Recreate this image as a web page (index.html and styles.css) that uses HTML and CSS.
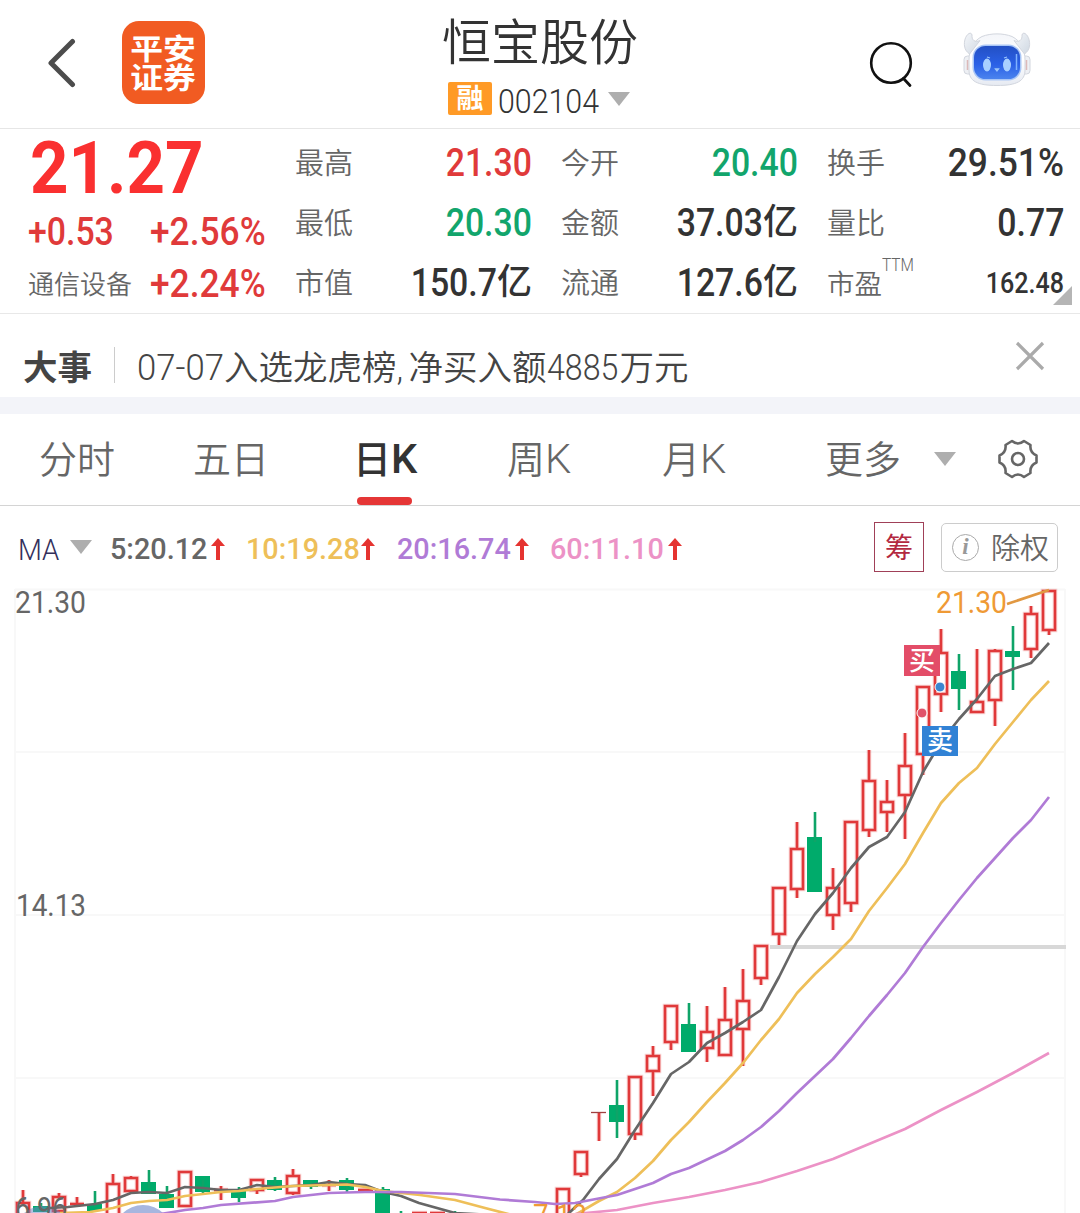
FILE: index.html
```html
<!DOCTYPE html>
<html lang="zh-CN">
<head>
<meta charset="utf-8">
<title>恒宝股份 002104</title>
<link rel="stylesheet" href="styles.css">
</head>
<body>
<header class="topbar">
  <svg class="back" width="30" height="50" viewBox="0 0 30 50"><path d="M25.500 3.500L4 25 25.500 46.500" fill="none" stroke="#4c4c4c" stroke-width="5" stroke-linecap="round" stroke-linejoin="round"/></svg>
  <div class="broker"><span>平安</span><span>证券</span></div>
  <div class="title">
    <h1>恒宝股份</h1>
    <div class="code"><b class="tag">融</b><span class="num code-num">002104</span><i class="tri"></i></div>
  </div>
  <svg class="search" width="44" height="48" viewBox="0 0 44 48"><circle cx="22" cy="23" r="19.800" fill="none" stroke="#111" stroke-width="2.600"/><path d="M34.500 38.500l6.500 7" stroke="#111" stroke-width="2.800" stroke-linecap="round"/></svg>
  <svg class="robot" width="68" height="56" viewBox="0 0 68 56">
    <defs>
      <linearGradient id="shell" x1="0" y1="0" x2="0" y2="1"><stop offset="0" stop-color="#f4f6fa"/><stop offset=".5" stop-color="#fff"/><stop offset="1" stop-color="#e6eaf2"/></linearGradient>
      <linearGradient id="face" x1="0" y1="0" x2="0" y2="1"><stop offset="0" stop-color="#2350c4"/><stop offset=".55" stop-color="#2a60e6"/><stop offset="1" stop-color="#4a83ee"/></linearGradient>
      <linearGradient id="horn" x1="0" y1="0" x2="1" y2="1"><stop offset="0" stop-color="#f5f7fa"/><stop offset="1" stop-color="#cfd8e2"/></linearGradient>
    </defs>
    <g stroke="#d2d6de" stroke-width="1">
      <rect x="1" y="24" width="9" height="18" rx="3.500" fill="#eef0f4"/>
      <rect x="58" y="24" width="9" height="18" rx="3.500" fill="#eef0f4"/>
      <path d="M19 4.500C28 1 40 1 49 4.500 58 9 62 18 62 28v10c0 11-8 15.500-28 15.500S6 49 6 38V28C6 18 10 9 19 4.500z" fill="url(#shell)"/>
      <path d="M6 1.500C2 4 1 10 1.500 14 2 18 4 20 6.500 22L17 8.500C12 11 8.500 8 9 3 8.500 1 7.500 1 6 1.500z" fill="url(#horn)"/>
      <path d="M62 1.500c4 2.500 5 8.500 4.500 12.500-.5 4-2.500 6-5 8L51 8.500c5 2.500 8.500-.5 8-5.500.5-2 1.500-2 3-1.500z" fill="url(#horn)"/>
    </g>
    <path d="M4.500 28v10M63.500 28v10" stroke="#dcb9b9" stroke-width="1.500"/>
    <rect x="9.500" y="12.500" width="49" height="36" rx="13" fill="#a9c6f6"/>
    <rect x="11" y="14" width="46" height="33" rx="11.500" fill="url(#face)"/>
    <ellipse cx="24" cy="33" rx="4" ry="6.500" fill="#a8d0ff"/><ellipse cx="44" cy="33" rx="4" ry="6.500" fill="#a8d0ff"/>
    <path d="M24 25l3 1M41 26l3-1M32.500 37l1.500 2 1.500-2z" stroke="#9cc5fa" stroke-width="1.300" fill="#9cc5fa"/>
    <path d="M53.500 22v16" stroke="#7fb2ff" stroke-width="1.500"/>
  </svg>
</header>

<section class="quote">
  <div class="last">
    <div class="price"><span class="num">21.27</span></div>
    <div class="chg"><span class="num">+0.53</span><span class="num pct">+2.56%</span></div>
    <div class="chg"><em>通信设备</em><span class="num pct">+2.24%</span></div>
  </div>
  <dl class="stats c1">
    <dt>最高</dt><dd class="up"><span class="num">21.30</span></dd>
    <dt>最低</dt><dd class="down"><span class="num">20.30</span></dd>
    <dt>市值</dt><dd><span class="num">150.7</span><u>亿</u></dd>
  </dl>
  <dl class="stats c2">
    <dt>今开</dt><dd class="down"><span class="num">20.40</span></dd>
    <dt>金额</dt><dd><span class="num">37.03</span><u>亿</u></dd>
    <dt>流通</dt><dd><span class="num">127.6</span><u>亿</u></dd>
  </dl>
  <dl class="stats c3">
    <dt>换手</dt><dd><span class="num pct">29.51%</span></dd>
    <dt>量比</dt><dd><span class="num">0.77</span></dd>
    <dt class="pe">市盈<sup>TTM</sup></dt><dd class="small"><span class="num">162.48</span></dd>
  </dl>
  <i class="corner"></i>
</section>

<section class="news">
  <b>大事</b>
  <p><span class="num n1">07-07</span>入选龙虎榜<span class="comma">,</span>净买入额<span class="num n2">4885</span>万元</p>
  <svg class="close" width="30" height="30" viewBox="0 0 30 30"><path d="M2 2l26 26M28 2L2 28" stroke="#aaa" stroke-width="3.200"/></svg>
</section>

<nav class="tabs">
  <span>分时</span><span>五日</span><span class="on">日<i class="k">K</i></span><span>周<i class="k">K</i></span><span>月<i class="k">K</i></span><span>更多</span>
  <i class="tri"></i>
  <svg class="gear" width="42" height="42" viewBox="-21 -21 42 42" fill="none" stroke="#666" stroke-width="2.600" stroke-linejoin="round"><path d="M18.500-3.500V3.500Q11.500 6.500 12.500 14L6 18Q0 13-6 18L-12.500 14Q-11.500 6.500-18.500 3.500V-3.500Q-11.500-6.500-12.500-14L-6-18Q0-13 6-18L12.500-14Q11.500-6.500 18.500-3.500z"/><circle r="6"/></svg>
</nav>

<section class="ma">
  <span class="num ma-name">MA</span><i class="tri"></i>
  <div class="avg m5"><span class="num">5:20.12</span><svg width="14" height="22" viewBox="0 0 14 22"><path d="M7 0l7 8H9v14H5V8H0z"/></svg></div>
  <div class="avg m10"><span class="num">10:19.28</span><svg width="14" height="22" viewBox="0 0 14 22"><path d="M7 0l7 8H9v14H5V8H0z"/></svg></div>
  <div class="avg m20"><span class="num">20:16.74</span><svg width="14" height="22" viewBox="0 0 14 22"><path d="M7 0l7 8H9v14H5V8H0z"/></svg></div>
  <div class="avg m60"><span class="num">60:11.10</span><svg width="14" height="22" viewBox="0 0 14 22"><path d="M7 0l7 8H9v14H5V8H0z"/></svg></div>
  <span class="chips">筹</span>
  <span class="adj"><i class="info">i</i>除权</span>
</section>

<svg class="chart" width="1080" height="627" viewBox="0 586 1080 627">
  <path class="grid" d="M15 589.500H1065M15 752H1065M15 915H1065M15 1078H1065M15 589V1213M1065 589V1213"/>
  <path d="M770 947H1066" stroke="#d8d8d8" stroke-width="4"/>
  <circle cx="143" cy="1234" r="29" fill="#a7b6df"/>
  <defs>
    <path id="rise" d="M1043 591h12v39h-12zM1049 630v5M1025 614h12v35h-12zM1031 606v8M1031 649v9M989 651h12v49h-12zM995 649v2M995 700v26M971 702h12v10h-12zM977 649v53M935 653h12v41h-12zM941 629v24M941 694v18M917 687h12v67h-12zM923 754v21M899 766h12v29h-12zM905 733v33M905 795v44M881 802h12v10h-12zM887 780v22M887 812v20M863 781h12v49h-12zM869 750v31M869 830v7M845 822h12v81h-12zM851 903v9M827 888h12v27h-12zM833 868v20M833 915v15M791 849h12v40h-12zM797 822v27M797 889v9M773 888h12v46h-12zM779 934v11M755 946h12v32h-12zM761 978v7M737 1001h12v28h-12zM743 969v32M743 1029v37M719 1020h12v35h-12zM725 987v33M701 1032h12v16h-12zM707 1006v26M707 1048v14M665 1006h12v36h-12zM671 1042v8M647 1056h12v15h-12zM653 1046v10M653 1071v25M629 1077h12v57h-12zM635 1134v6M599 1112v29M575 1152h12v22h-12zM581 1174v3M557 1189h12v40h-12zM287 1176h12v17h-12zM293 1169v7M293 1193v2M251 1180h12v10h-12zM257 1190v4M179 1172h12v34h-12zM125 1178h12v13h-12zM131 1176v2M131 1191v3M107 1184h12v40h-12zM113 1174v10M53 1197h12v14h-12zM59 1193v4M17 1203h12v20h-12zM23 1190v13M77 1197v7M70 1204h14M221 1186v14M214 1190h14M329 1180v11M322 1185h14M358 1190h15M412 1213h15M430 1213h15"/>
  </defs>
  <use href="#rise" fill="none" stroke="#e5393b" stroke-opacity=".22" stroke-width="4.600"/>
  <use href="#rise" fill="none" stroke="#e0393a" stroke-width="2.600"/>
  <path d="M591 1112.500h15" stroke="#a04040" stroke-width="1.300"/>
  <path class="fall" d="M1005 651h15v6h-15zM951 671h15v18h-15zM807 837h15v55h-15zM681 1024h15v28h-15zM609 1105h15v17h-15zM375 1189h15v25h-15zM339 1180h15v10h-15zM303 1180h15v7h-15zM267 1180h15v10h-15zM231 1190h15v8h-15zM195 1176h15v16h-15zM159 1194h15v14h-15zM141 1182h15v12h-15zM87 1204h15v7h-15zM33 1206h15v6h-15z"/>
  <path class="fall-wick" d="M1013 626v64M959 654v56M815 812v30M689 1003v25M617 1080v58M383 1187v6M347 1178v14M311 1180v9M275 1177v14M239 1187v15M203 1180v14M167 1186v12M149 1170v18M95 1191v16M401 1211v3M455 1211v3M41 1203v5"/>
  <circle cx="43" cy="1235" r="29" fill="#6f86c8" fill-opacity=".5"/>
  <g class="line">
    <path stroke="#666" d="M50 1208L68 1207 95 1204 113 1200 131 1193 149 1192 167 1193 185 1187 203 1188 221 1190 239 1190 257 1185 275 1187 293 1186 311 1185 329 1182 347 1184 365 1185 383 1192 401 1196 419 1203 455 1213 563 1219 570 1212 583 1200 599 1179 617 1159 635 1130 653 1103 671 1074 689 1062 707 1043 725 1033 743 1022 761 1010 779 977 797 941 815 914 833 893 851 868 869 847 887 837 905 812 923 772 941 742 959 719 977 699 995 676 1013 669 1031 663 1049 643"/>
    <path stroke="#eebf59" d="M60 1213L90 1212 113 1208 131 1203 149 1201 167 1200 185 1196 203 1194 221 1192 239 1191 257 1189 293 1186 347 1184.500 365 1187 383 1191 401 1193 420 1195 455 1200 485 1208 512 1215 575 1215 599 1201 617 1192 635 1178 653 1161 671 1140 689 1122 707 1102 725 1083 743 1063 761 1040 779 1019 797 993 815 974 833 957 851 939 869 911 887 888 905 864 923 833 941 803 959 783 977 768 995 744 1013 722 1031 700 1049 681"/>
    <path stroke="#b07bd6" d="M155 1215L185 1210 203 1208 221 1205 275 1201 293 1197 329 1193 365 1192 401 1192 455 1194 500 1199.500 535 1202 555 1204 575 1203 617 1195 653 1183 671 1174 689 1168 725 1151 743 1140 761 1127 779 1111 797 1093 815 1076 833 1059 851 1038 869 1016 887 995 905 973 923 947 941 923 959 900 977 878 995 858 1013 838 1031 820 1049 797"/>
    <path stroke="#ec92c6" d="M575 1214L617 1210 653 1203 689 1197 725 1190 761 1182 797 1171 833 1159 869 1144 905 1129 941 1110 977 1092 1013 1073 1049 1053"/>
    <path stroke="#e19842" d="M1007 604L1049 590"/>
  </g>
  <g class="axis">
    <text x="15" y="613" textLength="71" lengthAdjust="spacingAndGlyphs">21.30</text>
    <text x="16" y="916" textLength="70" lengthAdjust="spacingAndGlyphs">14.13</text>
    <text x="15" y="1219" textLength="52" lengthAdjust="spacingAndGlyphs">6.96</text>
  </g>
  <g class="mark">
    <text x="936" y="613" textLength="71" lengthAdjust="spacingAndGlyphs">21.30</text>
    <text x="533" y="1226" textLength="54" lengthAdjust="spacingAndGlyphs">7.13</text>
  </g>
  <circle cx="940" cy="687" r="5" fill="#3a86d0" stroke="#fff"/>
  <circle cx="922" cy="713" r="5" fill="#e0536a" stroke="#fff"/>
  <rect x="904" y="645" width="36" height="31" fill="#e34d68"/>
  <rect x="922" y="726" width="36" height="30" fill="#3182d5"/>
  <g class="deal"><text x="922" y="670">买</text><text x="940" y="750">卖</text></g>
</svg>
</body>
</html>
```
FILE: styles.css
```css
* { box-sizing: border-box; margin: 0; padding: 0; }
body {
  width: 1080px; height: 1213px; overflow: hidden; background: #fff; color: #333;
  font-family: Roboto, "Noto Sans CJK SC", sans-serif; font-weight: 400;
}
i, em { font-style: normal; }
u { text-decoration: none; }
svg { display: block; flex: none; }
.num { display: inline-block; white-space: nowrap; transform: scaleX(.89); transform-origin: left center; }
.tri { flex: none; width: 0; height: 0; border: 11px solid transparent; border-top: 14px solid #aeaeae; border-bottom: 0; }

.topbar { display: flex; height: 129px; border-bottom: 1px solid #e6e6e6; }
.back { margin: 38px 0 0 47px; }
.broker {
  width: 83px; height: 83px; margin: 21px 0 0 45px; padding-top: 12px; border-radius: 17px;
  background: #f15b22; color: #fff; font: 700 29px/29px "Noto Sans CJK SC", sans-serif;
  display: flex; flex-direction: column; align-items: center;
}
.broker span { height: 29px; overflow: visible; transform: scaleX(1.13); }
.title { width: 300px; margin-left: 185px; }
h1 { margin-top: 14px; font-size: 49px; font-weight: 350; line-height: 60px; text-align: center; white-space: nowrap; }
.code { display: flex; height: 34px; margin: 8px 0 0 58px; }
.tag { width: 44px; height: 33px; border-radius: 2px; background: #ff9a26; color: #fff; font-size: 27px; line-height: 34px; text-align: center; }
.code-num { margin-left: 6px; width: 110px; font-size: 33px; line-height: 39px; font-weight: 330; transform: scaleX(.92); }
.code .tri { margin-top: 10px; }
.search { margin: 40px 0 0 179px; }
.robot { margin: 32px 0 0 50px; }

.quote { position: relative; display: flex; height: 185px; border-bottom: 1px solid #e8e8e8; }
.quote .num { font-weight: 470; }
.last { width: 295px; padding-left: 28px; color: #e03a3a; }
.price { height: 77px; font-size: 73px; line-height: 78px; color: #fa3030; }
.price .num { margin-left: 2px; font-weight: 700; transform: scaleX(.92); }
.chg { display: grid; grid-template-columns: 122px 1fr; height: 52px; font-size: 38px; line-height: 53px; }
.chg em { color: #666; font-size: 26px; font-weight: 350; line-height: 54px; }
.quote .pct { transform: scaleX(.93); }
.stats { display: grid; grid-auto-rows: 60px; line-height: 60px; padding-top: 4px; }
.c1 { width: 237px; grid-template-columns: 60px 1fr; }
.c2 { width: 237px; margin-left: 29px; grid-template-columns: 60px 1fr; }
.c3 { width: 237px; margin-left: 29px; grid-template-columns: 90px 1fr; }
dt { color: #666; font-size: 29px; font-weight: 350; line-height: 63px; white-space: nowrap; }
dd { display: flex; justify-content: flex-end; font-size: 38px; }
dd .num { transform-origin: right center; }
dd u { font-size: 35px; font-weight: 500; line-height: 60px; }
.up { color: #e03a3a; }
.down { color: #12a56c; }
.pe { font-size: 27.5px; }
.pe sup { display: inline-block; font-size: 18px; line-height: 0; vertical-align: 23px; font-weight: 350; transform: scaleX(.86); transform-origin: left center; }
.small { font-size: 29.500px; }
.quote .small .num { transform: scaleX(.85); }
.corner { position: absolute; right: 8px; bottom: 8px; width: 19px; height: 19px; background: #b5b5b5; clip-path: polygon(100% 0, 100% 100%, 0 100%); }

.news { display: flex; height: 100px; border-bottom: 17px solid #f3f4f9; color: #444; }
.news b { width: 92px; height: 36px; margin-top: 33px; padding-left: 23px; font-size: 34.500px; line-height: 42px; white-space: nowrap; }
.news p { width: 876px; height: 36px; margin: 33px 0 0 22px; padding-left: 22px; border-left: 1px solid #ccc; font-size: 34.500px; line-height: 41px; font-weight: 350; white-space: nowrap; }
.news .num { font-size: 36.500px; line-height: 41px; font-weight: 330; transform: scaleX(.88); }
.news .n1 { width: 87px; transform: scaleX(.95); }
.n2 { width: 73px; }
.comma { display: inline-block; width: 12px; }
.close { margin: 27px 0 0 25px; }

.tabs { display: flex; height: 92px; border-bottom: 1px solid #d4d4d4; font-size: 38px; line-height: 93px; color: #666; font-weight: 350; padding-left: 39px; }
.tabs > span { width: 154px; white-space: nowrap; }
.tabs > span:nth-child(3) { width: 160px; }
.tabs > span:nth-child(4) { width: 155px; }
.tabs > span:nth-child(5) { width: 163px; }
.tabs > span:nth-child(6) { width: 109px; }
.k { display: inline-block; font-size: 40px; line-height: 60px; transform: scaleX(1.04); transform-origin: left center; }
.tabs .on { position: relative; padding-left: 6px; color: #333; font-weight: 500; }
.tabs .on::after { content: ""; position: absolute; left: 10px; bottom: 0; width: 55px; height: 8px; border-radius: 4px; background: #e53636; }
.tabs .tri { margin-top: 38px; }
.gear { margin: 24px 0 0 41px; }

.ma { display: flex; height: 80px; padding-left: 18px; line-height: 85px; font-size: 30px; font-weight: 460; white-space: nowrap; }
.ma-name { width: 53px; font-size: 30px; font-weight: 350; color: #33305c; line-height: 87px; transform: scaleX(.92); }
.ma .tri { margin: 34px 18px 0 -1px; }
.avg { display: flex; width: 151px; }
.avg .num { width: 115px; transform: scaleX(.96); }
.avg svg { margin-top: 32px; fill: #e53330; }
.m5 { width: 136px; color: #666; }
.m5 .num { width: 101px; }
.m10 { color: #eebf59; }
.m20 { width: 153px; color: #b07bd6; }
.m20 .num, .m60 .num { width: 118px; }
.m60 { width: 171px; color: #ec92c6; }
.chips { margin: 16px 0 0 153px; width: 50px; height: 50px; border: 1px solid #a04058; color: #b32840; font-size: 28px; line-height: 52px; text-align: center; font-weight: 400; }
.adj { display: flex; margin: 17px 0 0 17px; width: 117px; height: 49px; padding-left: 10px; border: 1px solid #ccc; border-radius: 5px; color: #666; font-size: 29px; line-height: 51px; font-weight: 350; }
.info { width: 27px; height: 27px; margin: 10px 12px 0 0; border: 1.500px solid #aaa; border-radius: 50%; color: #999; font: italic 700 23px/23px "Liberation Serif", serif; text-align: center; flex: none; }

.chart { overflow: hidden; font-size: 30.500px; font-weight: 450; }
.grid { fill: none; stroke: #f8f8f8; stroke-width: 2; }
.axis { fill: #666; }
.mark { fill: #ef9a35; }
.fall { fill: #00ab6b; }
.fall-wick { stroke: #0fa468; stroke-width: 2.600; fill: none; }
.line { fill: none; stroke-width: 2.700; stroke-linejoin: round; }
.deal { fill: #fff; font-size: 26px; text-anchor: middle; }
```
